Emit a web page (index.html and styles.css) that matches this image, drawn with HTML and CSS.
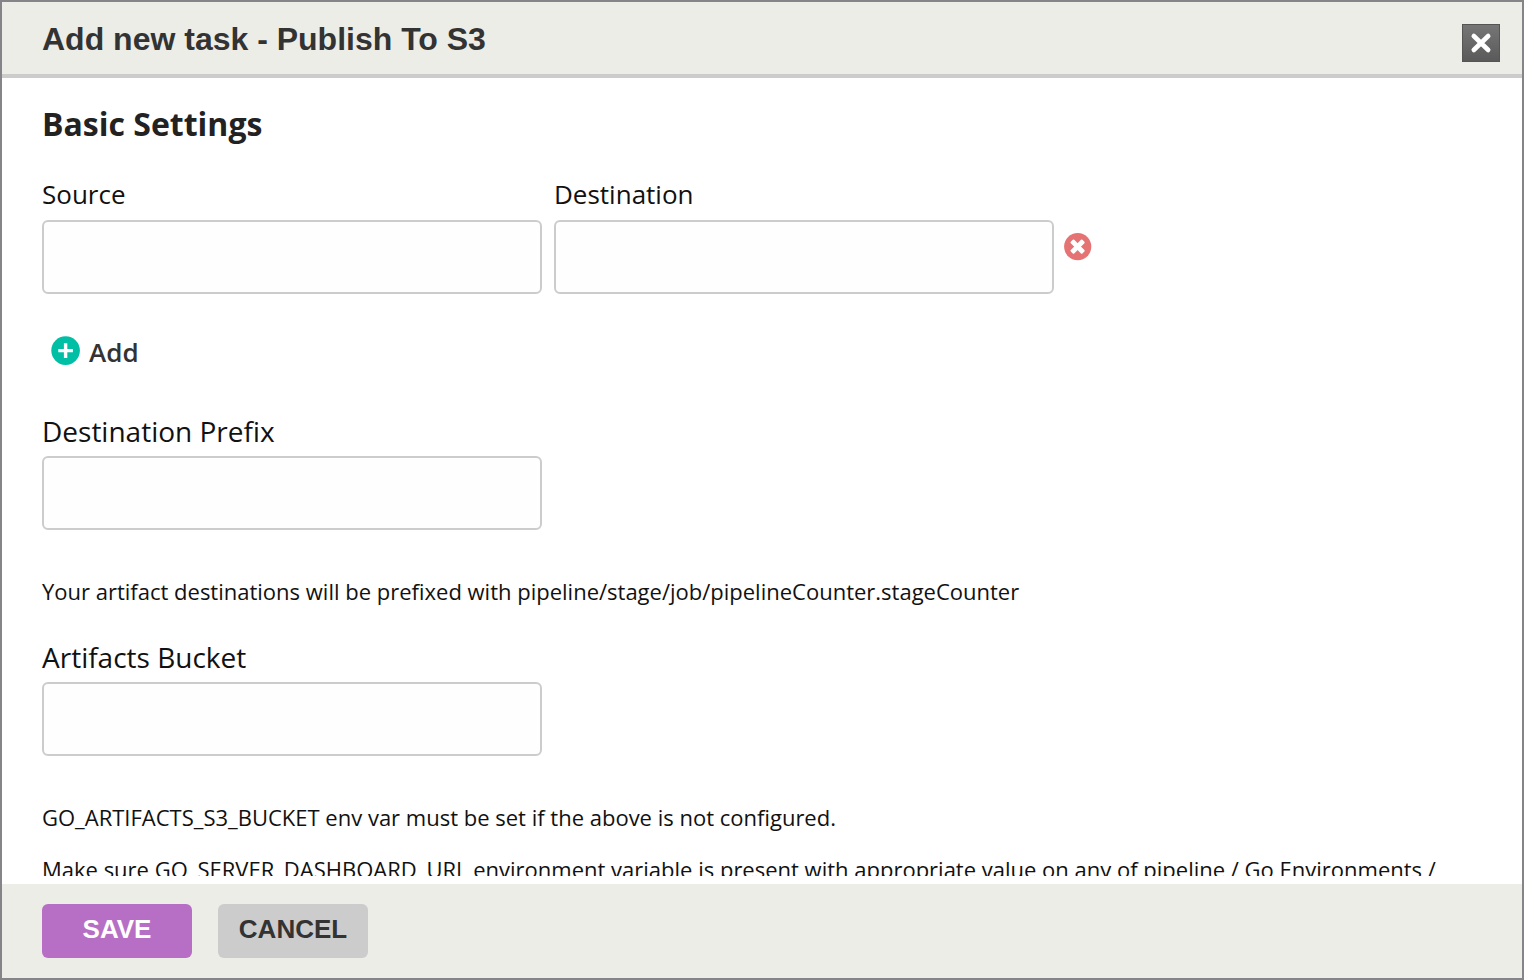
FILE: index.html
```html
<!DOCTYPE html>
<html lang="en">
<head>
<meta charset="utf-8">
<title>Add new task - Publish To S3</title>
<link rel="stylesheet" href="styles.css">
</head>
<body>
<form class="modal">
  <header class="modal-header">
    <h1 class="modal-title">Add new task - Publish To S3</h1>
    <button class="close" type="button" aria-label="Close">
      <svg viewBox="0 0 38 38" width="38" height="38"><path d="M11.8 12 26.2 26M26.2 12 11.8 26" stroke="#fff" stroke-width="4.6" stroke-linecap="round"/></svg>
    </button>
  </header>
  <main class="modal-body">
    <h2 class="section-title">Basic Settings</h2>
    <div class="pair">
      <div class="field">
        <label for="source">Source</label>
        <input id="source" type="text">
      </div>
      <div class="field">
        <label for="destination">Destination</label>
        <input id="destination" type="text">
      </div>
      <button class="remove" type="button" aria-label="Remove">
        <svg viewBox="0 0 28 28" width="28" height="28"><circle cx="13.7" cy="13.6" r="13.6" fill="#e57373"/><g fill="#fff" transform="rotate(45 13.6 13.6)"><rect x="5.4" y="11.2" width="16.4" height="4.8" rx="1"/><rect x="11.2" y="5.4" width="4.8" height="16.4" rx="1"/></g></svg>
      </button>
    </div>
    <button class="add" type="button">
      <svg viewBox="0 0 30 30" width="30" height="30"><circle cx="14.6" cy="14.6" r="14.3" fill="#00bfa5"/><path d="M14.6 7.3V21.9M7.3 14.6H21.9" stroke="#fff" stroke-width="3.4"/></svg>
      <span>Add</span>
    </button>
    <div class="field stacked">
      <label for="prefix">Destination Prefix</label>
      <input id="prefix" type="text">
    </div>
    <p class="hint">Your artifact destinations will be prefixed with pipeline/stage/job/pipelineCounter.stageCounter</p>
    <div class="field stacked">
      <label for="bucket">Artifacts Bucket</label>
      <input id="bucket" type="text">
    </div>
    <p class="hint">GO_ARTIFACTS_S3_BUCKET env var must be set if the above is not configured.</p>
    <p class="hint">Make sure GO_SERVER_DASHBOARD_URL environment variable is present with appropriate value on any of pipeline / Go Environments /</p>
  </main>
  <footer class="modal-footer">
    <button class="btn save" type="submit">SAVE</button>
    <button class="btn cancel" type="button">CANCEL</button>
  </footer>
</form>
</body>
</html>
```
FILE: styles.css
```css
* { box-sizing: border-box; }
body { margin: 0; font-family: "Open Sans", sans-serif; color: #111; }
button { border: 0; padding: 0; cursor: pointer; font-family: inherit; }
svg { display: block; fill: none; }
.modal { display: flex; flex-direction: column; height: 100vh; border: 2px solid #858488; background: #fff; }
.modal-header { display: flex; justify-content: space-between; align-items: flex-start; flex: none; padding: 18px 22px 12px 40px; background: #ecede6; border-bottom: 4px solid #ccc; }
.modal-title { margin: 0; font: bold 32px/38px "Liberation Sans", sans-serif; color: #333; }
.close { margin-top: 4px; background: linear-gradient(#777, #595959); box-shadow: inset 0 0 0 1px #555; }
.modal-body { flex: 1; min-height: 0; overflow: hidden; padding: 24px 40px 0; margin-bottom: 8px; }
.section-title { margin: 0 0 24px; font-size: 32px; line-height: 44px; color: #222; }
.pair { display: flex; align-items: flex-start; gap: 12px; }
.field { display: flex; flex-direction: column; width: 500px; gap: 2px; }
.field label { font-size: 26px; line-height: 48px; }
.stacked { gap: 4px; }
.stacked label { font-size: 28px; line-height: 42px; }
.field input { height: 74px; width: 100%; border: 2px solid #ccc; border-radius: 6px; background: #fefefe; padding: 0 16px; font: 28px "Open Sans", sans-serif; }
.remove { margin: 63px 0 0 -2px; background: none; }
.add { display: flex; align-items: center; gap: 8px; margin: 38px 0 40px 9px; background: none; font-size: 26px; line-height: 36px; font-weight: 600; color: #333; }
.add span { padding-top: 2px; }
.hint { margin: 46px 0 22px; font-size: 22px; line-height: 30px; }
.hint + .stacked { margin-top: 30px; }
.hint + .hint { margin-top: 22px; }
.modal-footer { display: flex; flex: none; gap: 26px; padding: 20px 40px; background: #ecede6; }
.btn { width: 150px; height: 54px; padding-bottom: 4px; border-radius: 6px; font: bold 26px "Liberation Sans", sans-serif; }
.save { background: #b76fc5; color: #fff; }
.cancel { background: #ccc; color: #333; }
```
